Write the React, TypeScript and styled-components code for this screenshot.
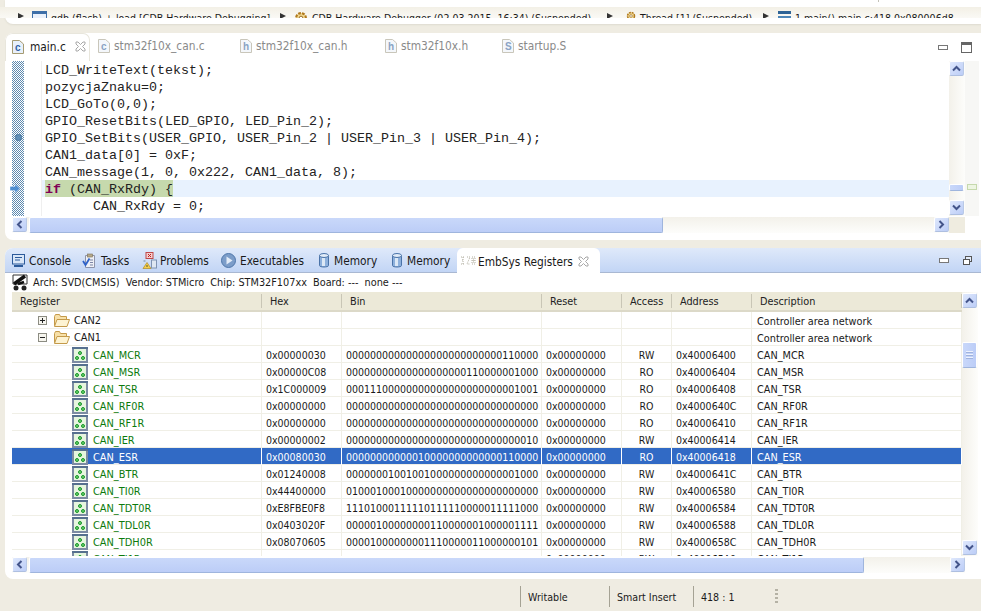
import React from 'react';
import styled, { createGlobalStyle } from 'styled-components';

const uiFont = `"DejaVu Sans Condensed", "Noto Sans", "Liberation Sans", sans-serif`;

const GlobalStyle = createGlobalStyle`
	html, body {
		margin: 0;
		padding: 0;
		background: #efece2;
	}
`;

const Page = styled.div`
	width: 981px;
	height: 611px;
	overflow: hidden;
	display: flex;
	flex-direction: column;
	background: #efece2;
	font-family: ${uiFont};
	font-size: 10.5px;
	color: #1a1a1a;
`;

/* breadcrumb strip */
const TopStrip = styled.div`
	height: 24px;
	flex: none;
	padding-top: 7px;
	box-sizing: border-box;
	background: #fff;
	border-bottom-left-radius: 8px;
	margin-left: 5px;
	box-shadow: 0 1px 2px #dedbd0;
	position: relative;

	&::after {
		content: '';
		position: absolute;
		left: 873px;
		top: 0;
		width: 1px;
		height: 2px;
		background: #c4c2b8;
	}
`;

const Crumbs = styled.div`
	height: 11px;
	margin-left: -5px;
	padding-left: 18px;
	background: linear-gradient(#f3f0e6, #faf9f5);
	overflow: hidden;
	display: flex;
	align-items: flex-start;
`;

const Crumb = styled.div<{ $width: number }>`
	width: ${(p) => p.$width}px;
	flex: none;
	display: flex;
	gap: 4px;
	white-space: nowrap;
	line-height: 16px;
	padding-top: 3px;
	font-size: 10.5px;

	svg {
		flex: none;
		margin-top: 1px;
	}
`;

const CrumbArrow = styled.span<{ $gap?: number }>`
	width: 0;
	height: 0;
	margin: 3px ${(p) => p.$gap ?? 4}px 0 0;
	border-left: 6px solid #333;
	border-top: 3px solid transparent;
	border-bottom: 3px solid transparent;
`;

/* shared panels */
const Panel = styled.section<{ $height: number; $top: number }>`
	height: ${(p) => p.$height}px;
	margin: ${(p) => p.$top}px 0 0 5px;
	flex: none;
	display: flex;
	flex-direction: column;
	box-sizing: border-box;
	background: #fff;
	border-radius: 8px 0 0 8px;
	overflow: hidden;
`;

const EditorTabs = styled.div`
	height: 28px;
	flex: none;
	display: flex;
	align-items: stretch;
`;

const Tab = styled.div<{ $width: number; $active?: boolean }>`
	width: ${(p) => p.$width}px;
	flex: none;
	box-sizing: border-box;
	display: flex;
	align-items: center;
	gap: ${(p) => (p.$active ? 6 : 4)}px;
	padding: 0 0 2px ${(p) => (p.$active ? 6 : 8)}px;
	font-size: 11.8px;
	color: ${(p) => (p.$active ? '#1a1a1a' : '#8a8a8a')};
	white-space: nowrap;
	${(p) =>
		p.$active
			? `background: #fff;
	border-radius: 7px 7px 0 0;
	border: 1px solid #e8e6dc;
	border-bottom: none;`
			: ''}
`;

const TabClose = styled.span`
	margin-left: 3px;
	display: flex;
`;

const PanelButtons = styled.div<{ $gap: number }>`
	margin-left: auto;
	margin-right: 9px;
	display: flex;
	gap: ${(p) => p.$gap}px;
	align-items: center;
`;

const EditorBody = styled.div`
	height: 155px;
	flex: none;
	display: flex;
`;

const Ruler = styled.div`
	width: 12px;
	margin-left: 7px;
	flex: none;
	background: repeating-conic-gradient(#5d8ab0 0 25%, #fff 0 50%) 0 0 / 2px 2px;
	display: flex;
	flex-direction: column;
`;

const RulerRow = styled.div`
	height: 17px;
	flex: none;
	display: flex;
	align-items: center;
	justify-content: center;
`;

const Gutter = styled.div`
	width: 17px;
	flex: none;
	border-right: 1px solid #efefef;
`;

const Code = styled.div`
	width: 907px;
	flex: none;
	overflow: hidden;
	font-family: "Liberation Mono", monospace;
	font-size: 13.33px;
	color: #222;
`;

const CodeLine = styled.div<{ $current?: boolean }>`
	height: 17px;
	line-height: 19px;
	padding-left: 3px;
	white-space: pre;
	overflow: hidden;
	background: ${(p) => (p.$current ? '#e8f2fe' : 'transparent')};
`;

const Stepped = styled.span`
	background: #c6d9ad;
	display: inline-block;
	vertical-align: top;
	height: 17px;
	width: 128px;
`;

const Keyword = styled.b`
	color: #7f0055;
`;

const Overview = styled.div`
	width: 14px;
	flex: none;
	background: #f7f7f5;
	display: flex;
	flex-direction: column;
	align-items: center;
	padding-top: 123px;
	box-sizing: border-box;
`;

const OverviewMark = styled.div`
	width: 8px;
	height: 4px;
	background: #edf5e2;
	border: 1px solid #c6d9ad;
`;

/* scroll bars */
const VBar = styled.div<{ $pad: string }>`
	width: 16px;
	flex: none;
	box-sizing: border-box;
	padding: ${(p) => p.$pad};
	display: flex;
	flex-direction: column;
	background: linear-gradient(90deg, #f3f1ea, #fdfdfb);
`;

const HBar = styled.div<{ $right: number; $left: number; $height: number }>`
	height: ${(p) => p.$height}px;
	flex: none;
	margin: 1px ${(p) => p.$right}px 0 ${(p) => p.$left}px;
	display: flex;
	align-items: stretch;
	background: linear-gradient(#f3f1ea, #fdfdfb);
`;

const ScrollButton = styled.div`
	width: 15px;
	height: 15px;
	flex: none;
	box-sizing: border-box;
	border: 1px solid #fff;
	border-bottom-color: #aebfe0;
	border-right-color: #b9c9e6;
	border-radius: 2px;
	background: linear-gradient(135deg, #dfe8fc, #bccdf7);
	display: flex;
	align-items: center;
	justify-content: center;
`;

const VThumb = styled.div<{ $top: number; $height: number }>`
	height: ${(p) => p.$height}px;
	margin-top: ${(p) => p.$top}px;
	flex: none;
	box-sizing: border-box;
	width: 15px;
	border: 1px solid #fff;
	border-bottom-color: #9fb5dd;
	border-radius: 2px;
	background: linear-gradient(90deg, #c9d8fa, #bccdf7);
	display: flex;
	flex-direction: column;
	align-items: center;
	justify-content: center;
	gap: 1px;
`;

const Grip = styled.i`
	width: 7px;
	height: 1px;
	background: #eef2fd;
	border-bottom: 1px solid #9fb3de;
`;

const Spring = styled.div`
	flex: 1;
`;

const HThumb = styled.div<{ $width: number }>`
	width: ${(p) => p.$width}px;
	flex: none;
	margin-left: 2px;
	box-sizing: border-box;
	border: 1px solid #fff;
	border-bottom-color: #9fb5dd;
	border-right-color: #9fb5dd;
	border-radius: 2px;
	background: linear-gradient(#c9d8fa, #bccdf7);
`;

const HCorner = styled.div`
	width: 16px;
	flex: none;
	background: #efece0;
`;

/* bottom view */
const ViewTabs = styled.div`
	height: 25px;
	flex: none;
	display: flex;
	align-items: stretch;
	padding-left: 7px;
	box-sizing: border-box;
	background: linear-gradient(#dfe9fa, #c2d5f5);
	border-bottom: 1px solid #a9b8d2;
`;

const ViewTab = styled.div<{ $width: number; $active?: boolean }>`
	width: ${(p) => p.$width}px;
	flex: none;
	box-sizing: border-box;
	display: flex;
	align-items: center;
	gap: ${(p) => (p.$active ? 2 : 4)}px;
	font-size: 11.8px;
	white-space: nowrap;

	span {
		padding-top: 2px;
	}

	${(p) =>
		p.$active
			? `background: #fff;
	border-radius: 6px 6px 0 0;
	padding-left: 4px;
	margin-bottom: -1px;`
			: ''}
`;

const InfoRow = styled.div`
	height: 19px;
	flex: none;
	display: flex;
	align-items: center;
	gap: 5px;
	padding-left: 7px;
	font-size: 10.8px;
	white-space: pre;
`;

const TableArea = styled.div`
	height: 264px;
	flex: none;
	display: flex;
	padding-left: 7px;
`;

const Table = styled.div`
	width: 950px;
	flex: none;
	overflow: hidden;
`;

const columns = '250px 80px 200px 80px 50px 80px 210px';

const HeaderRow = styled.div`
	height: 20px;
	display: grid;
	grid-template-columns: ${columns};
	box-sizing: border-box;
	background: #ece9d8;
	border-bottom: 2px solid #dcd9c8;
`;

const HeaderCell = styled.div`
	padding-left: 8px;
	font-size: 10.8px;
	color: #222;
	border-right: 1px solid #c9c6b6;
	margin: 2px 0;
	line-height: 16px;
	height: 14px;
`;

const Row = styled.div<{ $selected?: boolean }>`
	height: 17px;
	display: grid;
	grid-template-columns: ${columns};
	box-sizing: border-box;
	border-bottom: 1px solid #f0efe6;
	background: ${(p) => (p.$selected ? '#316ac5' : '#fff')};
	color: ${(p) => (p.$selected ? '#fff' : '#1a1a1a')};
`;

const Cell = styled.div<{ $center?: boolean; $selected?: boolean; $wide?: boolean }>`
	padding-left: ${(p) => (p.$center ? '0' : p.$wide ? '5px' : '4px')};
	text-align: ${(p) => (p.$center ? 'center' : 'left')};
	font-size: ${(p) => (p.$wide ? '10.8px' : '10.5px')};
	line-height: 19px;
	white-space: nowrap;
	overflow: hidden;
	border-right: 1px solid ${(p) => (p.$selected ? '#fff' : '#f0efe6')};
`;

const TreeCell = styled.div<{ $indent: number; $green?: boolean; $selected?: boolean }>`
	display: flex;
	align-items: center;
	padding: 1px 0 0 ${(p) => p.$indent}px;
	gap: 4px;
	font-size: 10.9px;
	color: ${(p) => (p.$selected ? '#fff' : p.$green ? '#0b7a0b' : '#1a1a1a')};
	border-right: 1px solid ${(p) => (p.$selected ? '#fff' : '#f0efe6')};
`;

const StatusBar = styled.footer`
	flex: 1;
	display: flex;
	padding: 7px 0 0 520px;
`;

const StatusField = styled.div<{ $width: number }>`
	width: ${(p) => p.$width}px;
	height: 21px;
	box-sizing: border-box;
	line-height: 23px;
	padding-left: 7px;
	border-left: 1px solid #a5a294;
	font-size: 10.6px;
`;

const StatusGrip = styled.div`
	width: 3px;
	height: 16px;
	margin: 3px 0 0 0;
	background: repeating-linear-gradient(#b5b2a5 0 2px, transparent 2px 4px);
`;

/* icons */
const FileIcon: React.FC<{ letter: string; dim?: boolean }> = ({ letter, dim }) => (
	<svg width="12" height="14" viewBox="0 0 12 14">
		<path d="M.5.5h7l4 3.500v9.500H.5z" fill={dim ? '#f4f7fb' : '#e8f0fb'} stroke={dim ? '#c9c6ba' : '#a59b72'} />
		<text x="3" y="11" fontSize="10" fontWeight="bold" fontFamily="Liberation Sans" fill={dim ? '#8aa3c4' : '#2f5fa5'}>
			{letter}
		</text>
	</svg>
);

const CloseIcon: React.FC = () => (
	<svg width="11" height="11" viewBox="0 0 11 11">
		<path d="M1 1l2 0 2.500 2.500L8 1h2v2L7.500 5.500 10 8v2H8L5.500 7.500 3 10H1V8l2.500-2.500L1 3z" fill="#fff" stroke="#a8a8a8" />
	</svg>
);

const MinimizeIcon: React.FC = () => (
	<svg width="10" height="5" viewBox="0 0 10 5">
		<rect x=".5" y=".5" width="9" height="4" fill="#fff" stroke="#777" />
	</svg>
);

const MaximizeIcon: React.FC = () => (
	<svg width="11" height="11" viewBox="0 0 11 11">
		<rect x=".5" y=".5" width="10" height="10" fill="#fff" stroke="#666" />
		<rect x="1" y="1" width="9" height="2" fill="#666" />
	</svg>
);

const RestoreIcon: React.FC = () => (
	<svg width="9" height="9" viewBox="0 0 9 9">
		<rect x="2.500" y=".5" width="6" height="5" fill="#e4ecfa" stroke="#555" />
		<rect x=".5" y="3.500" width="6" height="5" fill="#fff" stroke="#555" />
	</svg>
);

const Chevron: React.FC<{ dir: 'up' | 'down' | 'left' | 'right' }> = ({ dir }) => {
	const rot = { up: 0, right: 90, down: 180, left: 270 }[dir];
	return (
		<svg width="9" height="9" viewBox="0 0 9 9">
			<path d="M1 6.500l3.500-3.500L8 6.500" fill="none" stroke="#43548a" strokeWidth="2" transform={`rotate(${rot} 4.500 4.500)`} />
		</svg>
	);
};

const WindowIcon: React.FC = () => (
	<svg width="15" height="14" viewBox="0 0 15 14">
		<rect x=".5" y=".5" width="14" height="13" fill="#eaf1fb" stroke="#3d6fa8" />
		<rect x="1" y="1" width="13" height="2" fill="#3d6fa8" />
	</svg>
);

const GearIcon: React.FC<{ size?: number }> = ({ size = 10 }) => (
	<svg width={size} height={size} viewBox="0 0 10 10">
		<circle cx="5" cy="5" r="3.500" fill="#f2d890" stroke="#b07a20" strokeWidth="1.500" strokeDasharray="2 .8" />
		<circle cx="5" cy="5" r="1.300" fill="#fff" stroke="#8a5a10" strokeWidth=".6" />
	</svg>
);

const StackIcon: React.FC = () => (
	<svg width="13" height="10" viewBox="0 0 13 10">
		<rect width="13" height="3" fill="#2e6396" />
		<rect y="5" width="13" height="3" fill="#4d86b8" />
	</svg>
);

const ConsoleIcon: React.FC = () => (
	<svg width="13" height="13" viewBox="0 0 13 13">
		<rect x=".5" y=".5" width="12" height="9.500" fill="#d9e6f7" stroke="#2c5a9a" />
		<path d="M3 3.500h7M3 6h5" stroke="#2c5a9a" />
		<rect x="2" y="11" width="9" height="2" fill="#2c5a9a" />
	</svg>
);

const TasksIcon: React.FC = () => (
	<svg width="15" height="15" viewBox="0 0 15 15">
		<path d="M3.500 2.500h9v12h-9z" fill="#eef0f6" stroke="#8e94aa" />
		<rect x="5.500" y="1" width="5" height="3" fill="#b6a98a" stroke="#7d7259" strokeWidth=".6" />
		<path d="M8 7h3M8 9.500h3M8 12h3" stroke="#7d86a6" />
		<path d="M1 8l2.500 4L7.500 5.500" fill="none" stroke="#2f62c8" strokeWidth="1.800" />
	</svg>
);

const ProblemsIcon: React.FC = () => (
	<svg width="15" height="17" viewBox="0 0 15 17" style={{ marginRight: -1 }}>
		<rect x="4" y=".5" width="7" height="6" fill="#f4cfcf" stroke="#c04848" />
		<path d="M6 2l3 3M9 2L6 5" stroke="#c02020" />
		<rect x="1.500" y="8" width="2" height="2" fill="#9fb3cc" />
		<rect x="9.500" y="8" width="5" height="8" fill="#dfe7f2" stroke="#7f93b3" />
		<path d="M5 10.500L9 16.500H1z" fill="#f6cf4a" stroke="#a67c10" strokeWidth=".6" />
		<rect x="4.500" y="13" width="1" height="2" fill="#553" />
	</svg>
);

const ExecutablesIcon: React.FC = () => (
	<svg width="15" height="15" viewBox="0 0 15 15">
		<circle cx="7.500" cy="7.500" r="7" fill="#7c9dc9" stroke="#4f76aa" />
		<path d="M5.500 3.500l6 4-6 4z" fill="#e3ecf8" />
	</svg>
);

const MemoryIcon: React.FC = () => (
	<svg width="12" height="15" viewBox="0 0 12 15">
		<path d="M1.500 2.500v10c0 2 9 2 9 0v-10z" fill="#8db0dc" stroke="#4a73a8" />
		<ellipse cx="6" cy="2.500" rx="4.500" ry="2" fill="#e2ecf8" stroke="#4a73a8" />
		<rect x="4" y="5" width="3" height="8" fill="#dce8f6" />
	</svg>
);

const RegistersIcon: React.FC = () => (
	<svg width="15" height="9" viewBox="0 0 15 9">
		<path d="M0 1h4M2 1v7M0 8h4M6 1h3L6 8h3M11 1h3v7h-3zM1 4h2M12 3h1v3h-1z" stroke="#b3b0a2" fill="none" strokeDasharray="1 1" />
	</svg>
);

const BoardIcon: React.FC = () => (
	<svg width="16" height="17" viewBox="0 0 16 17">
		<path d="M1 1h14v9H1z" fill="#fff" stroke="#333" />
		<path d="M2 10L13 2" stroke="#111" strokeWidth="3.500" />
		<circle cx="4" cy="14" r="2.500" fill="#222" />
		<circle cx="12" cy="14" r="2.500" fill="#222" />
		<path d="M6 10l6-2" stroke="#111" strokeWidth="2.500" />
	</svg>
);

const TreeToggle: React.FC<{ open: boolean }> = ({ open }) => (
	<svg width="9" height="9" viewBox="0 0 9 9">
		<rect x=".5" y=".5" width="8" height="8" fill="#f6f5ee" stroke="#8c8c82" />
		<path d={open ? 'M2 4.500h5' : 'M2 4.500h5M4.500 2v5'} stroke="#222" />
	</svg>
);

const FolderIcon: React.FC = () => (
	<svg width="16" height="13" viewBox="0 0 16 13" style={{ marginLeft: 3 }}>
		<path d="M.5 2.500l1-2h4l1 2h6v9H.5z" fill="#f7e0a8" stroke="#c49a4a" />
		<path d="M.5 12.500L3 5.500h12.500l-2.500 7z" fill="#fdf3d2" stroke="#c49a4a" />
	</svg>
);

const RegisterIcon: React.FC = () => (
	<svg width="16" height="16" viewBox="0 0 16 16" style={{ marginRight: 1 }}>
		<rect x="1" y="1" width="14" height="14" fill="#e6f5de" stroke="#7c8ba3" strokeWidth="2" />
		<rect x="0" y="0" width="16" height="2" fill="#56708f" />
		<circle cx="8" cy="6" r="1.500" fill="#6fd06f" stroke="#16962a" />
		<circle cx="5" cy="11" r="1.500" fill="#6fd06f" stroke="#16962a" />
		<circle cx="11" cy="11" r="1.500" fill="#6fd06f" stroke="#16962a" />
	</svg>
);

const BreakpointDot = styled.i`
	width: 7px;
	height: 7px;
	border-radius: 50%;
	background: #5f8fb8;
	border: 1px solid #46739c;
	box-sizing: border-box;
`;

const StepArrow: React.FC = () => (
	<svg width="10" height="9" viewBox="0 0 10 9" style={{ marginLeft: -6 }}>
		<path d="M0 2.500h5V0l5 4.500L5 9V6.500H0z" fill="#4f8ed0" stroke="#d8e8f8" strokeWidth=".5" />
	</svg>
);

/* data */
const codeLines = [
	'LCD_WriteText(tekst);',
	'pozycjaZnaku=0;',
	'LCD_GoTo(0,0);',
	'GPIO_ResetBits(LED_GPIO, LED_Pin_2);',
	'GPIO_SetBits(USER_GPIO, USER_Pin_2 | USER_Pin_3 | USER_Pin_4);',
	'CAN1_data[0] = 0xF;',
	'CAN_message(1, 0, 0x222, CAN1_data, 8);',
];

const registers = [
	['CAN_MCR', '0x00000030', '00000000000000000000000000110000', 'RW', '0x40006400'],
	['CAN_MSR', '0x00000C08', '00000000000000000000110000001000', 'RO', '0x40006404'],
	['CAN_TSR', '0x1C000009', '00011100000000000000000000001001', 'RO', '0x40006408'],
	['CAN_RF0R', '0x00000000', '00000000000000000000000000000000', 'RO', '0x4000640C'],
	['CAN_RF1R', '0x00000000', '00000000000000000000000000000000', 'RO', '0x40006410'],
	['CAN_IER', '0x00000002', '00000000000000000000000000000010', 'RW', '0x40006414'],
	['CAN_ESR', '0x00080030', '00000000000010000000000000110000', 'RO', '0x40006418'],
	['CAN_BTR', '0x01240008', '00000001001001000000000000001000', 'RW', '0x4000641C'],
	['CAN_TI0R', '0x44400000', '01000100010000000000000000000000', 'RW', '0x40006580'],
	['CAN_TDT0R', '0xE8FBE0F8', '11101000111110111110000011111000', 'RW', '0x40006584'],
	['CAN_TDL0R', '0x0403020F', '00000100000000110000001000001111', 'RW', '0x40006588'],
	['CAN_TDH0R', '0x08070605', '00001000000001110000011000000101', 'RW', '0x4000658C'],
	['CAN_TI1R', '', '', 'RW', '0x400065A0'],
];

const headers = ['Register', 'Hex', 'Bin', 'Reset', 'Access', 'Address', 'Description'];

const App: React.FC = () => (
	<Page>
		<GlobalStyle />
		<TopStrip>
			<Crumbs>
				<Crumb $width={262}>
					<CrumbArrow />
					<WindowIcon />
					<span>gdb (flash) + load [CDB Hardware Debugging]</span>
				</Crumb>
				<Crumb $width={327}>
					<CrumbArrow />
					<GearIcon size={14} />
					<span>CDB Hardware Debugger (02.03.2015, 16:34) (Suspended)</span>
				</Crumb>
				<Crumb $width={156}>
					<CrumbArrow $gap={9} />
					<GearIcon />
					<span>Thread [1] (Suspended)</span>
				</Crumb>
				<Crumb $width={200}>
					<CrumbArrow $gap={5} />
					<StackIcon />
					<span>1 main() main.c:418 0x080006d8</span>
				</Crumb>
			</Crumbs>
		</TopStrip>

		<Panel $height={207} $top={9}>
			<EditorTabs>
				<Tab $width={85} $active>
					<FileIcon letter="c" />
					<span>main.c</span>
					<TabClose>
						<CloseIcon />
					</TabClose>
				</Tab>
				<Tab $width={142}>
					<FileIcon letter="c" dim />
					<span>stm32f10x_can.c</span>
				</Tab>
				<Tab $width={145}>
					<FileIcon letter="h" dim />
					<span>stm32f10x_can.h</span>
				</Tab>
				<Tab $width={117}>
					<FileIcon letter="h" dim />
					<span>stm32f10x.h</span>
				</Tab>
				<Tab $width={100}>
					<FileIcon letter="S" dim />
					<span>startup.S</span>
				</Tab>
				<PanelButtons $gap={13}>
					<MinimizeIcon />
					<MaximizeIcon />
				</PanelButtons>
			</EditorTabs>
			<EditorBody>
				<Ruler>
					{Array.from({ length: 9 }, (_, i) => (
						<RulerRow key={i}>
							{i === 4 && <BreakpointDot />}
							{i === 7 && <StepArrow />}
						</RulerRow>
					))}
				</Ruler>
				<Gutter />
				<Code>
					{codeLines.map((line) => (
						<CodeLine key={line}>{line}</CodeLine>
					))}
					<CodeLine $current>
						<Stepped>
							<Keyword>if</Keyword> (CAN_RxRdy) {'{'}
						</Stepped>
					</CodeLine>
					<CodeLine>{'      CAN_RxRdy = 0;'}</CodeLine>
				</Code>
				<VBar $pad="0 0 1px">
					<ScrollButton>
						<Chevron dir="up" />
					</ScrollButton>
					<VThumb $top={108} $height={7} />
					<Spring />
					<ScrollButton>
						<Chevron dir="down" />
					</ScrollButton>
				</VBar>
				<Overview>
					<OverviewMark />
				</Overview>
			</EditorBody>
			<HBar $left={7} $right={16} $height={16}>
				<ScrollButton>
					<Chevron dir="left" />
				</ScrollButton>
				<HThumb $width={634} />
				<Spring />
				<ScrollButton>
					<Chevron dir="right" />
				</ScrollButton>
				<HCorner />
			</HBar>
		</Panel>

		<Panel $height={331} $top={8}>
			<ViewTabs>
				<ViewTab $width={70}>
					<ConsoleIcon />
					<span>Console</span>
				</ViewTab>
				<ViewTab $width={60}>
					<TasksIcon />
					<span>Tasks</span>
				</ViewTab>
				<ViewTab $width={79}>
					<ProblemsIcon />
					<span>Problems</span>
				</ViewTab>
				<ViewTab $width={97}>
					<ExecutablesIcon />
					<span>Executables</span>
				</ViewTab>
				<ViewTab $width={73}>
					<MemoryIcon />
					<span>Memory</span>
				</ViewTab>
				<ViewTab $width={66}>
					<MemoryIcon />
					<span>Memory</span>
				</ViewTab>
				<ViewTab $width={143} $active>
					<RegistersIcon />
					<span>EmbSys Registers</span>
					<TabClose>
						<CloseIcon />
					</TabClose>
				</ViewTab>
				<PanelButtons $gap={14}>
					<MinimizeIcon />
					<RestoreIcon />
				</PanelButtons>
			</ViewTabs>
			<InfoRow>
				<BoardIcon />
				<span>Arch: SVD(CMSIS)  Vendor: STMicro  Chip: STM32F107xx  Board: ---  none ---</span>
			</InfoRow>
			<TableArea>
				<Table>
					<HeaderRow>
						{headers.map((h) => (
							<HeaderCell key={h}>{h}</HeaderCell>
						))}
					</HeaderRow>
					<Row>
						<TreeCell $indent={26}>
							<TreeToggle open={false} />
							<FolderIcon />
							<span>CAN2</span>
						</TreeCell>
						{['', '', '', '', ''].map((_, i) => (
							<Cell key={i} />
						))}
						<Cell $wide>Controller area network</Cell>
					</Row>
					<Row>
						<TreeCell $indent={26}>
							<TreeToggle open />
							<FolderIcon />
							<span>CAN1</span>
						</TreeCell>
						{['', '', '', '', ''].map((_, i) => (
							<Cell key={i} />
						))}
						<Cell $wide>Controller area network</Cell>
					</Row>
					{registers.map(([name, hex, bin, access, address]) => {
						const selected = name === 'CAN_ESR';
						return (
							<Row key={name} $selected={selected}>
								<TreeCell $indent={60} $green $selected={selected}>
									<RegisterIcon />
									<span>{name}</span>
								</TreeCell>
								<Cell $selected={selected}>{hex}</Cell>
								<Cell $selected={selected}>{bin}</Cell>
								<Cell $selected={selected}>0x00000000</Cell>
								<Cell $center $selected={selected}>
									{access}
								</Cell>
								<Cell $selected={selected}>{address}</Cell>
								<Cell $wide $selected={selected}>
									{name}
								</Cell>
							</Row>
						);
					})}
				</Table>
				<VBar $pad="1px 0">
					<ScrollButton>
						<Chevron dir="up" />
					</ScrollButton>
					<VThumb $top={34} $height={26}>
						<Grip />
						<Grip />
						<Grip />
					</VThumb>
					<Spring />
					<ScrollButton>
						<Chevron dir="down" />
					</ScrollButton>
				</VBar>
			</TableArea>
			<HBar $left={7} $right={16} $height={16}>
				<ScrollButton>
					<Chevron dir="left" />
				</ScrollButton>
				<HThumb $width={835} />
				<Spring />
				<ScrollButton>
					<Chevron dir="right" />
				</ScrollButton>
			</HBar>
		</Panel>

		<StatusBar>
			<StatusField $width={89}>Writable</StatusField>
			<StatusField $width={84}>Smart Insert</StatusField>
			<StatusField $width={82}>418 : 1</StatusField>
			<StatusGrip />
		</StatusBar>
	</Page>
);

export default App;
